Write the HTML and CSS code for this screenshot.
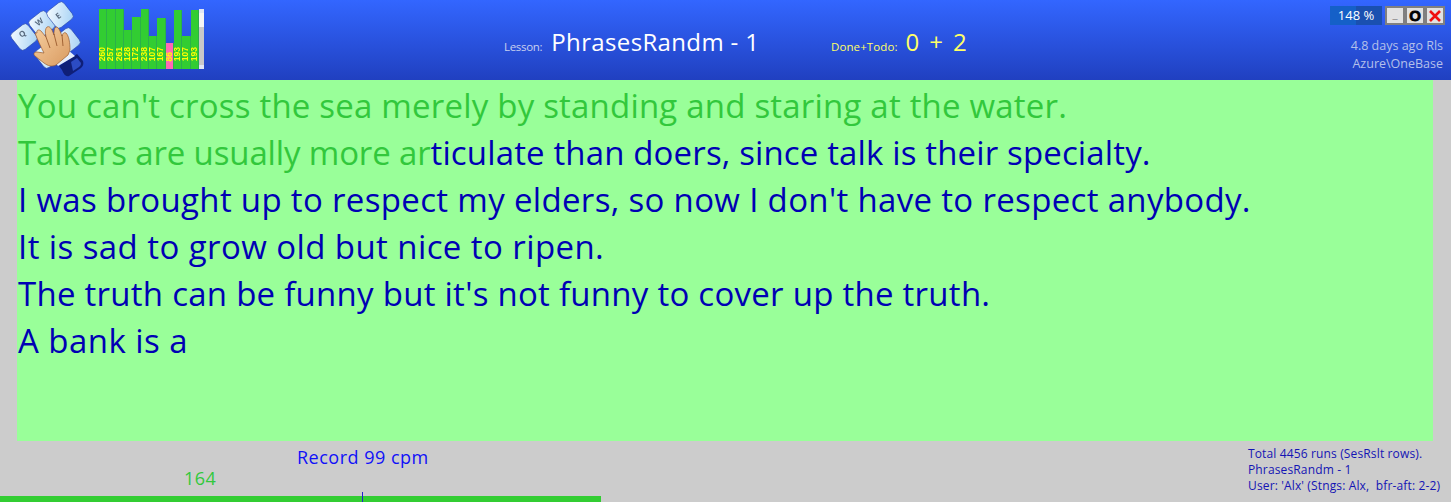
FILE: index.html
```html
<!DOCTYPE html>
<html lang="en">
<head>
    <meta charset="UTF-8">
    <title>Typing Tutor</title>
    <link rel="stylesheet" href="styles.css">
</head>
<body>
    <header class="topbar">
        <svg class="logo" viewBox="0 0 90 80" width="90" height="80">
            <defs>
                <linearGradient id="keyFill" x1="0" y1="0" x2="1" y2="1">
                    <stop offset="0" stop-color="#f6fbff"/>
                    <stop offset="1" stop-color="#a6d2f4"/>
                </linearGradient>
                <linearGradient id="handFill" x1="0" y1="0" x2="1" y2="1">
                    <stop offset="0" stop-color="#f6cfa0"/>
                    <stop offset="1" stop-color="#d99a60"/>
                </linearGradient>
            </defs>
            <g stroke="#2a4aa8" stroke-width="0.6" fill="url(#keyFill)">
                <rect x="-10.5" y="-10.5" width="21" height="21" rx="4" transform="translate(48 55) rotate(-38)"/>
                <rect x="-10.5" y="-10.5" width="21" height="21" rx="4" transform="translate(67 41) rotate(-38)"/>
                <rect x="-10.5" y="-10.5" width="21" height="21" rx="4" transform="translate(24 37) rotate(-38)"/>
                <rect x="-10.5" y="-10.5" width="21" height="21" rx="4" transform="translate(42 24) rotate(-38)"/>
                <rect x="-10.5" y="-10.5" width="21" height="21" rx="4" transform="translate(60 15) rotate(-38)"/>
            </g>
            <g class="key-letters">
                <text transform="translate(24 36) rotate(-38)">Q</text>
                <text transform="translate(41 24) rotate(-38)">W</text>
                <text transform="translate(60 18) rotate(-38)">E</text>
            </g>
            <path d="M62 70l-3-4 18-12 6 7c1 3 0 5-2 7l-12 8c-3 1-5-1-7-6z" fill="#0f1f78"/>
            <path d="M71 62l6-4 4 5c0 2-1 3-2 4l-6 4z" fill="#2c4cc4"/>
            <path d="M58 66l-4-5 14-11 7 6z" fill="#e6effc"/>
            <path d="M37 33c-1-3 2-4 4-2l5 6c-1-5-1-8 1-10 2-1 3 0 5 3l2 5c0-4 0-7 2-8 2 0 3 2 4 4l2 5c1-3 2-4 4-3 3 3 4 10 4 17l-2 5-12 10c-4 2-8 1-12-2l-9-7c-2-2-1-4 2-4l7 1c-3-6-6-12-9-20z" fill="url(#handFill)" stroke="#9a5a2c" stroke-width="0.7"/>
            <path d="M46 37l4 11M54 34l3 12M62 35l1 11" stroke="#9a5a2c" stroke-width="0.9" fill="none"/>
        </svg>

        <div class="chart">
            <div class="chart-bars">
                <div class="bar" style="height:60px"><span>260</span></div>
                <div class="bar" style="height:60px"><span>257</span></div>
                <div class="bar" style="height:60px"><span>261</span></div>
                <div class="bar" style="height:39px"><span>128</span></div>
                <div class="bar" style="height:52px"><span>172</span></div>
                <div class="bar" style="height:60px"><span>238</span></div>
                <div class="bar" style="height:33px"><span>107</span></div>
                <div class="bar" style="height:51px"><span>167</span></div>
                <div class="bar bar-low" style="height:26px"><span>86</span></div>
                <div class="bar" style="height:59px"><span>193</span></div>
                <div class="bar" style="height:33px"><span>107</span></div>
                <div class="bar" style="height:59px"><span>193</span></div>
            </div>
            <div class="chart-scroll"><i></i><b></b><i></i></div>
        </div>

        <div class="lesson">
            <span class="small-label">Lesson:</span>
            <span class="lesson-name">PhrasesRandm - 1</span>
        </div>
        <div class="counts">
            <span class="small-label">Done+Todo:</span>
            <span class="counts-value">0 + 2</span>
        </div>

        <div class="status">
            <div class="window-row">
                <div class="zoom-level">148 %</div>
                <button class="win-btn win-min">_</button>
                <button class="win-btn win-o">O</button>
                <button class="win-btn win-x">
                    <svg viewBox="0 0 14 14" width="14" height="14"><path d="M2 2l10 10M12 2L2 12" stroke="#f01010" stroke-width="2.6" fill="none"/></svg>
                </button>
            </div>
            <div class="status-text">4.8 days ago Rls</div>
            <div class="status-text">Azure\OneBase</div>
        </div>
    </header>

    <main class="lesson-text">
        <div class="line-1"><span class="done">You can't cross the sea merely by standing and staring at the water.</span></div>
        <div class="line-2"><span class="done">Talkers are usually more ar</span>ticulate than doers, since talk is their specialty.</div>
        <div class="line-3">I was brought up to respect my elders, so now I don't have to respect anybody.</div>
        <div class="line-4">It is sad to grow old but nice to ripen.</div>
        <div class="line-5">The truth can be funny but it's not funny to cover up the truth.</div>
        <div class="line-6">A bank is a</div>
    </main>

    <footer class="bottom">
        <div class="speed">
            <div class="record">Record 99 cpm</div>
            <div class="current">164</div>
            <div class="progress">
                <div class="progress-fill" style="width:601px"></div>
                <div class="progress-tick" style="left:362px"></div>
            </div>
        </div>
        <div class="totals">
            <div>Total 4456 runs (SesRslt rows).</div>
            <div>PhrasesRandm - 1</div>
            <div>User: 'Alx' (Stngs: Alx,&nbsp; bfr-aft: 2-2)</div>
        </div>
    </footer>
</body>
</html>
```

FILE: styles.css
```css
* {
  box-sizing: border-box;
  margin: 0;
  padding: 0;
}

html, body {
  height: 502px;
  overflow: hidden;
}

body {
  font-family: 'Open Sans', 'Noto Sans', sans-serif;
  background: #cccccc;
}

.topbar {
  display: flex;
  align-items: flex-start;
  height: 80px;
  background: linear-gradient(to bottom, #3366ff, #2040c0);
  color: #fff;
}

.logo {
  flex: none;
  width: 90px;
  filter: blur(0.35px);
}

.key-letters text {
  font-size: 8px;
  font-weight: 700;
  fill: #5a6c80;
  text-anchor: middle;
}

.chart {
  display: flex;
  flex: none;
  width: 105px;
  height: 60px;
  margin: 9px 0 0 9px;
}

.chart-bars {
  display: flex;
  flex: none;
  align-items: flex-end;
  width: 100px;
}

.bar {
  display: flex;
  flex: 1 1 0;
  align-items: flex-end;
  justify-content: center;
  min-width: 0;
  background: #32cd32;
  border-right: 1px solid #2bb04a;
}

.bar-low {
  background: #ff69b4;
}

.bar span {
  padding-top: 8px;
  font-family: 'Liberation Sans', sans-serif;
  font-size: 8.5px;
  font-weight: 700;
  line-height: 7px;
  color: #ffff00;
  writing-mode: vertical-rl;
  transform: rotate(180deg);
}

.chart-scroll {
  display: flex;
  flex: none;
  flex-direction: column;
  width: 5px;
  background: #c8c8c8;
}

.chart-scroll i {
  height: 4px;
  background: #dfe6f5;
}

.chart-scroll b {
  height: 14px;
  margin-bottom: auto;
  background: #f4f4f4;
}

.lesson, .counts {
  display: flex;
  flex: none;
  align-items: baseline;
  margin-top: 25px;
}

.lesson {
  width: 327px;
  margin-left: 300px;
}

.counts {
  color: #ffff66;
}

.small-label {
  font-size: 11.5px;
  letter-spacing: -0.3px;
}

.counts .small-label {
  letter-spacing: 0.1px;
}

.lesson .small-label {
  color: #c8d0f0;
}

.lesson-name, .counts-value {
  margin-left: 9px;
  font-size: 24px;
  line-height: 33px;
  letter-spacing: 0.35px;
}

.counts-value {
  margin-left: 8px;
  word-spacing: 3px;
}

.status {
  flex: none;
  margin-left: auto;
  padding: 6px 6px 0 0;
  text-align: right;
}

.window-row {
  display: flex;
  justify-content: flex-end;
  height: 19px;
  margin-bottom: 12px;
}

.zoom-level {
  width: 52px;
  margin-right: 3px;
  font-size: 13px;
  line-height: 19px;
  text-align: center;
  color: #fff;
  background: linear-gradient(to right, #1560c8 50%, #1a50b0 50%);
}

.win-btn {
  display: flex;
  align-items: center;
  justify-content: center;
  width: 20px;
  height: 19px;
  font-family: 'Liberation Sans', sans-serif;
  font-size: 12px;
  font-weight: 700;
  color: #222;
  background: #e2e2e2;
  border: 2px solid #808080;
}

.win-min {
  font-size: 9px;
}

.win-o {
  font-size: 15px;
  color: #000;
  -webkit-text-stroke: 0.8px #000;
}

.status-text {
  margin-right: 2px;
  font-size: 12.5px;
  line-height: 18px;
  color: #b4c0ea;
}

.lesson-text {
  height: 361px;
  margin: 0 18px 0 17px;
  padding: 2px 0 0 1px;
  font-size: 33px;
  line-height: 47px;
  white-space: nowrap;
  color: #0000b4;
  background: #99ff99;
}

.done {
  color: #32c83c;
}

/* open sans runs a bit different from the original font, so each line is evened out */
.line-1 { letter-spacing: 0.2px; }
.line-2 { letter-spacing: 0.14px; }
.line-2 .done { letter-spacing: -0.15px; }
.line-3 { letter-spacing: 0.33px; }
.line-4 { letter-spacing: 0.42px; }
.line-5 { letter-spacing: 0.26px; }
.line-6 { letter-spacing: 0.45px; }

.bottom {
  display: flex;
  justify-content: space-between;
  height: 61px;
}

.speed {
  flex: 1;
}

.record {
  margin: 5px 0 0 297px;
  font-size: 18px;
  line-height: 22px;
  letter-spacing: 0.5px;
  color: #1010f8;
}

.current {
  margin: 0 0 0 184px;
  font-size: 18px;
  line-height: 20px;
  letter-spacing: 0.5px;
  color: #32c83c;
}

.progress {
  position: relative;
  height: 10px;
  margin-top: 4px;
}

.progress-fill {
  position: absolute;
  bottom: 0;
  left: 0;
  height: 6px;
  background: #32cd32;
}

.progress-tick {
  position: absolute;
  top: 0;
  bottom: 0;
  width: 1px;
  background: #2020d0;
}

.totals {
  flex: none;
  width: 203px;
  padding-top: 5px;
  font-size: 12px;
  line-height: 16px;
  letter-spacing: 0.14px;
  white-space: nowrap;
  color: #1414b4;
}
```
